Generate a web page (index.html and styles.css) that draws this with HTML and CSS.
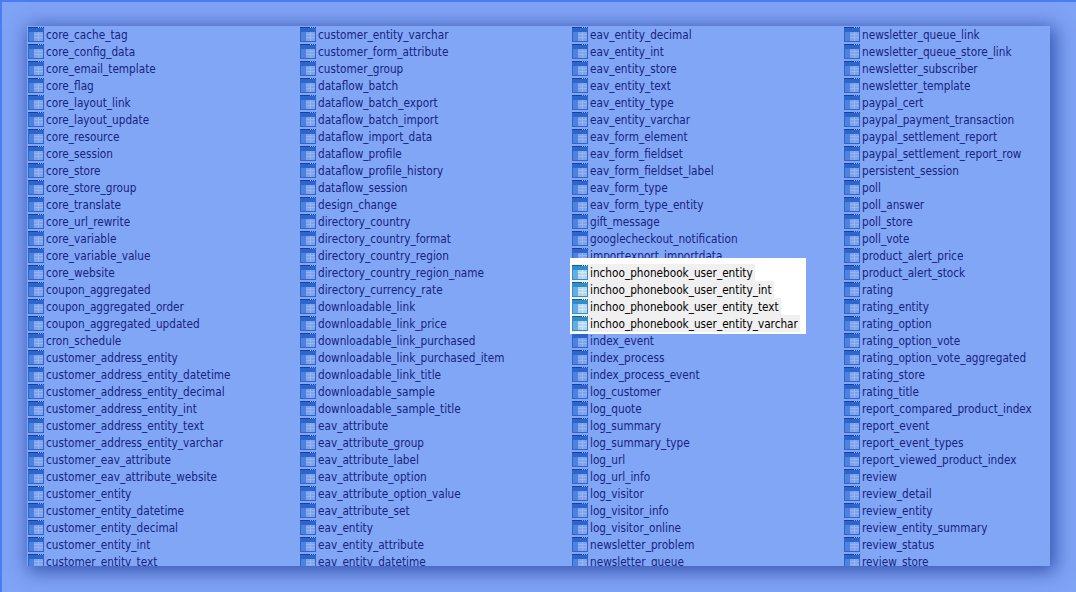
FILE: index.html
```html
<!DOCTYPE html>
<html lang="en">
<head>
  <meta charset="UTF-8" />
  <title>Tables</title>
  <link rel="stylesheet" href="styles.css">
</head>
<body>

  <svg class="defs" width="0" height="0" aria-hidden="true">
    <symbol id="tbl" viewBox="0 0 16 15">
      <rect x="0" y="0" width="16" height="15" fill="var(--ico-dark)" />
      <rect x="0" y="0" width="10" height="1" fill="var(--ico-line)" />
      <rect x="10" y="0" width="6" height="1" fill="var(--ico-bg)" />
      <rect x="11" y="0" width="1" height="1" fill="var(--ico-line)" />
      <rect x="13" y="0" width="1" height="1" fill="var(--ico-line)" />
      <rect x="15" y="0" width="1" height="1" fill="var(--ico-line)" />
      <rect x="1" y="5" width="5" height="9" fill="var(--ico-mid)" />
      <rect x="6" y="5" width="9" height="9" fill="var(--ico-grid)" />
      <rect x="6" y="5" width="4" height="2" fill="var(--ico-cell)" />
      <rect x="11" y="5" width="4" height="2" fill="var(--ico-cell)" />
      <rect x="6" y="8" width="4" height="2" fill="var(--ico-cell)" />
      <rect x="11" y="8" width="4" height="2" fill="var(--ico-cell)" />
      <rect x="6" y="11" width="4" height="3" fill="var(--ico-cell)" />
      <rect x="11" y="11" width="4" height="3" fill="var(--ico-cell)" />
    </symbol>
  </svg>

  <div class="screen">
    <div class="panel">

      <!-- column 1 -->
      <ul class="col">
        <li><svg class="ico"><use href="#tbl"/></svg>core_cache_tag</li>
        <li><svg class="ico"><use href="#tbl"/></svg>core_config_data</li>
        <li><svg class="ico"><use href="#tbl"/></svg>core_email_template</li>
        <li><svg class="ico"><use href="#tbl"/></svg>core_flag</li>
        <li><svg class="ico"><use href="#tbl"/></svg>core_layout_link</li>
        <li><svg class="ico"><use href="#tbl"/></svg>core_layout_update</li>
        <li><svg class="ico"><use href="#tbl"/></svg>core_resource</li>
        <li><svg class="ico"><use href="#tbl"/></svg>core_session</li>
        <li><svg class="ico"><use href="#tbl"/></svg>core_store</li>
        <li><svg class="ico"><use href="#tbl"/></svg>core_store_group</li>
        <li><svg class="ico"><use href="#tbl"/></svg>core_translate</li>
        <li><svg class="ico"><use href="#tbl"/></svg>core_url_rewrite</li>
        <li><svg class="ico"><use href="#tbl"/></svg>core_variable</li>
        <li><svg class="ico"><use href="#tbl"/></svg>core_variable_value</li>
        <li><svg class="ico"><use href="#tbl"/></svg>core_website</li>
        <li><svg class="ico"><use href="#tbl"/></svg>coupon_aggregated</li>
        <li><svg class="ico"><use href="#tbl"/></svg>coupon_aggregated_order</li>
        <li><svg class="ico"><use href="#tbl"/></svg>coupon_aggregated_updated</li>
        <li><svg class="ico"><use href="#tbl"/></svg>cron_schedule</li>
        <li><svg class="ico"><use href="#tbl"/></svg>customer_address_entity</li>
        <li><svg class="ico"><use href="#tbl"/></svg>customer_address_entity_datetime</li>
        <li><svg class="ico"><use href="#tbl"/></svg>customer_address_entity_decimal</li>
        <li><svg class="ico"><use href="#tbl"/></svg>customer_address_entity_int</li>
        <li><svg class="ico"><use href="#tbl"/></svg>customer_address_entity_text</li>
        <li><svg class="ico"><use href="#tbl"/></svg>customer_address_entity_varchar</li>
        <li><svg class="ico"><use href="#tbl"/></svg>customer_eav_attribute</li>
        <li><svg class="ico"><use href="#tbl"/></svg>customer_eav_attribute_website</li>
        <li><svg class="ico"><use href="#tbl"/></svg>customer_entity</li>
        <li><svg class="ico"><use href="#tbl"/></svg>customer_entity_datetime</li>
        <li><svg class="ico"><use href="#tbl"/></svg>customer_entity_decimal</li>
        <li><svg class="ico"><use href="#tbl"/></svg>customer_entity_int</li>
        <li><svg class="ico"><use href="#tbl"/></svg>customer_entity_text</li>
      </ul>

      <!-- column 2 -->
      <ul class="col">
        <li><svg class="ico"><use href="#tbl"/></svg>customer_entity_varchar</li>
        <li><svg class="ico"><use href="#tbl"/></svg>customer_form_attribute</li>
        <li><svg class="ico"><use href="#tbl"/></svg>customer_group</li>
        <li><svg class="ico"><use href="#tbl"/></svg>dataflow_batch</li>
        <li><svg class="ico"><use href="#tbl"/></svg>dataflow_batch_export</li>
        <li><svg class="ico"><use href="#tbl"/></svg>dataflow_batch_import</li>
        <li><svg class="ico"><use href="#tbl"/></svg>dataflow_import_data</li>
        <li><svg class="ico"><use href="#tbl"/></svg>dataflow_profile</li>
        <li><svg class="ico"><use href="#tbl"/></svg>dataflow_profile_history</li>
        <li><svg class="ico"><use href="#tbl"/></svg>dataflow_session</li>
        <li><svg class="ico"><use href="#tbl"/></svg>design_change</li>
        <li><svg class="ico"><use href="#tbl"/></svg>directory_country</li>
        <li><svg class="ico"><use href="#tbl"/></svg>directory_country_format</li>
        <li><svg class="ico"><use href="#tbl"/></svg>directory_country_region</li>
        <li><svg class="ico"><use href="#tbl"/></svg>directory_country_region_name</li>
        <li><svg class="ico"><use href="#tbl"/></svg>directory_currency_rate</li>
        <li><svg class="ico"><use href="#tbl"/></svg>downloadable_link</li>
        <li><svg class="ico"><use href="#tbl"/></svg>downloadable_link_price</li>
        <li><svg class="ico"><use href="#tbl"/></svg>downloadable_link_purchased</li>
        <li><svg class="ico"><use href="#tbl"/></svg>downloadable_link_purchased_item</li>
        <li><svg class="ico"><use href="#tbl"/></svg>downloadable_link_title</li>
        <li><svg class="ico"><use href="#tbl"/></svg>downloadable_sample</li>
        <li><svg class="ico"><use href="#tbl"/></svg>downloadable_sample_title</li>
        <li><svg class="ico"><use href="#tbl"/></svg>eav_attribute</li>
        <li><svg class="ico"><use href="#tbl"/></svg>eav_attribute_group</li>
        <li><svg class="ico"><use href="#tbl"/></svg>eav_attribute_label</li>
        <li><svg class="ico"><use href="#tbl"/></svg>eav_attribute_option</li>
        <li><svg class="ico"><use href="#tbl"/></svg>eav_attribute_option_value</li>
        <li><svg class="ico"><use href="#tbl"/></svg>eav_attribute_set</li>
        <li><svg class="ico"><use href="#tbl"/></svg>eav_entity</li>
        <li><svg class="ico"><use href="#tbl"/></svg>eav_entity_attribute</li>
        <li><svg class="ico"><use href="#tbl"/></svg>eav_entity_datetime</li>
      </ul>

      <!-- column 3, holds the highlighted rows -->
      <ul class="col">
        <li><svg class="ico"><use href="#tbl"/></svg>eav_entity_decimal</li>
        <li><svg class="ico"><use href="#tbl"/></svg>eav_entity_int</li>
        <li><svg class="ico"><use href="#tbl"/></svg>eav_entity_store</li>
        <li><svg class="ico"><use href="#tbl"/></svg>eav_entity_text</li>
        <li><svg class="ico"><use href="#tbl"/></svg>eav_entity_type</li>
        <li><svg class="ico"><use href="#tbl"/></svg>eav_entity_varchar</li>
        <li><svg class="ico"><use href="#tbl"/></svg>eav_form_element</li>
        <li><svg class="ico"><use href="#tbl"/></svg>eav_form_fieldset</li>
        <li><svg class="ico"><use href="#tbl"/></svg>eav_form_fieldset_label</li>
        <li><svg class="ico"><use href="#tbl"/></svg>eav_form_type</li>
        <li><svg class="ico"><use href="#tbl"/></svg>eav_form_type_entity</li>
        <li><svg class="ico"><use href="#tbl"/></svg>gift_message</li>
        <li><svg class="ico"><use href="#tbl"/></svg>googlecheckout_notification</li>
        <li><svg class="ico"><use href="#tbl"/></svg>importexport_importdata</li>
        <li class="hl">
          <ul class="hl-rows">
            <li><svg class="ico"><use href="#tbl"/></svg>inchoo_phonebook_user_entity</li>
            <li><svg class="ico"><use href="#tbl"/></svg>inchoo_phonebook_user_entity_int</li>
            <li><svg class="ico"><use href="#tbl"/></svg>inchoo_phonebook_user_entity_text</li>
            <li><svg class="ico"><use href="#tbl"/></svg>inchoo_phonebook_user_entity_varchar</li>
          </ul>
        </li>
        <li><svg class="ico"><use href="#tbl"/></svg>index_event</li>
        <li><svg class="ico"><use href="#tbl"/></svg>index_process</li>
        <li><svg class="ico"><use href="#tbl"/></svg>index_process_event</li>
        <li><svg class="ico"><use href="#tbl"/></svg>log_customer</li>
        <li><svg class="ico"><use href="#tbl"/></svg>log_quote</li>
        <li><svg class="ico"><use href="#tbl"/></svg>log_summary</li>
        <li><svg class="ico"><use href="#tbl"/></svg>log_summary_type</li>
        <li><svg class="ico"><use href="#tbl"/></svg>log_url</li>
        <li><svg class="ico"><use href="#tbl"/></svg>log_url_info</li>
        <li><svg class="ico"><use href="#tbl"/></svg>log_visitor</li>
        <li><svg class="ico"><use href="#tbl"/></svg>log_visitor_info</li>
        <li><svg class="ico"><use href="#tbl"/></svg>log_visitor_online</li>
        <li><svg class="ico"><use href="#tbl"/></svg>newsletter_problem</li>
        <li><svg class="ico"><use href="#tbl"/></svg>newsletter_queue</li>
      </ul>

      <!-- column 4 -->
      <ul class="col">
        <li><svg class="ico"><use href="#tbl"/></svg>newsletter_queue_link</li>
        <li><svg class="ico"><use href="#tbl"/></svg>newsletter_queue_store_link</li>
        <li><svg class="ico"><use href="#tbl"/></svg>newsletter_subscriber</li>
        <li><svg class="ico"><use href="#tbl"/></svg>newsletter_template</li>
        <li><svg class="ico"><use href="#tbl"/></svg>paypal_cert</li>
        <li><svg class="ico"><use href="#tbl"/></svg>paypal_payment_transaction</li>
        <li><svg class="ico"><use href="#tbl"/></svg>paypal_settlement_report</li>
        <li><svg class="ico"><use href="#tbl"/></svg>paypal_settlement_report_row</li>
        <li><svg class="ico"><use href="#tbl"/></svg>persistent_session</li>
        <li><svg class="ico"><use href="#tbl"/></svg>poll</li>
        <li><svg class="ico"><use href="#tbl"/></svg>poll_answer</li>
        <li><svg class="ico"><use href="#tbl"/></svg>poll_store</li>
        <li><svg class="ico"><use href="#tbl"/></svg>poll_vote</li>
        <li><svg class="ico"><use href="#tbl"/></svg>product_alert_price</li>
        <li><svg class="ico"><use href="#tbl"/></svg>product_alert_stock</li>
        <li><svg class="ico"><use href="#tbl"/></svg>rating</li>
        <li><svg class="ico"><use href="#tbl"/></svg>rating_entity</li>
        <li><svg class="ico"><use href="#tbl"/></svg>rating_option</li>
        <li><svg class="ico"><use href="#tbl"/></svg>rating_option_vote</li>
        <li><svg class="ico"><use href="#tbl"/></svg>rating_option_vote_aggregated</li>
        <li><svg class="ico"><use href="#tbl"/></svg>rating_store</li>
        <li><svg class="ico"><use href="#tbl"/></svg>rating_title</li>
        <li><svg class="ico"><use href="#tbl"/></svg>report_compared_product_index</li>
        <li><svg class="ico"><use href="#tbl"/></svg>report_event</li>
        <li><svg class="ico"><use href="#tbl"/></svg>report_event_types</li>
        <li><svg class="ico"><use href="#tbl"/></svg>report_viewed_product_index</li>
        <li><svg class="ico"><use href="#tbl"/></svg>review</li>
        <li><svg class="ico"><use href="#tbl"/></svg>review_detail</li>
        <li><svg class="ico"><use href="#tbl"/></svg>review_entity</li>
        <li><svg class="ico"><use href="#tbl"/></svg>review_entity_summary</li>
        <li><svg class="ico"><use href="#tbl"/></svg>review_status</li>
        <li><svg class="ico"><use href="#tbl"/></svg>review_store</li>
      </ul>

    </div>
  </div>

</body>
</html>
```

FILE: styles.css
```css
* {
  margin: 0;
  padding: 0;
  box-sizing: border-box;
}

html, body {
  height: 100%;
  overflow: hidden;
}

body {
  font-family: "DejaVu Sans", sans-serif;
  font-stretch: condensed;
  font-size: 11.7px;
  color: #16237f;
  background: #7fa3f5;
}

.defs {
  position: absolute;
}

.screen {
  height: 592px;
  padding: 24px 0 0 25px;
  background: #7fa3f5;
  border-top: 2px solid #4a7df5;
  border-left: 2px solid #4a7df5;
}

.panel {
  display: grid;
  grid-template-columns: repeat(4, 272px);
  width: 1023px;
  height: 540px;
  padding-left: 1px;
  overflow: hidden;
  background: #82a6f6;
  box-shadow: 3px 3px 18px 2px rgba(30, 55, 150, 0.75);
}

.col {
  list-style: none;
  --ico-bg: #82a6f6;
  --ico-dark: #2a66cc;
  --ico-line: #1f3f96;
  --ico-mid: #4f82dc;
  --ico-grid: #96b4f0;
  --ico-cell: #7fa3ea;
}

.col li {
  display: flex;
  align-items: center;
  gap: 2px;
  height: 17px;
  padding-top: 1px;
  white-space: nowrap;
}

.ico {
  flex: none;
  width: 16px;
  height: 15px;
  margin-top: -1px;
}

/* pasted white block with the selected rows */
.col .hl {
  display: block;
  position: relative;
  width: 236px;
  height: 76px;
  margin: -6px 0 -2px -2px;
  padding: 6px 0 0 2px;
  background: #fff;
  color: #000;
  --ico-bg: #f0f0f0;
  --ico-dark: #2f8fc9;
  --ico-line: #245a8a;
  --ico-mid: #66aee0;
  --ico-grid: #d5e7f6;
  --ico-cell: #b4d5ee;
}

.hl-rows {
  list-style: none;
}

.hl-rows li {
  width: fit-content;
  padding-right: 2px;
  background: #f0f0f0;
}
```
